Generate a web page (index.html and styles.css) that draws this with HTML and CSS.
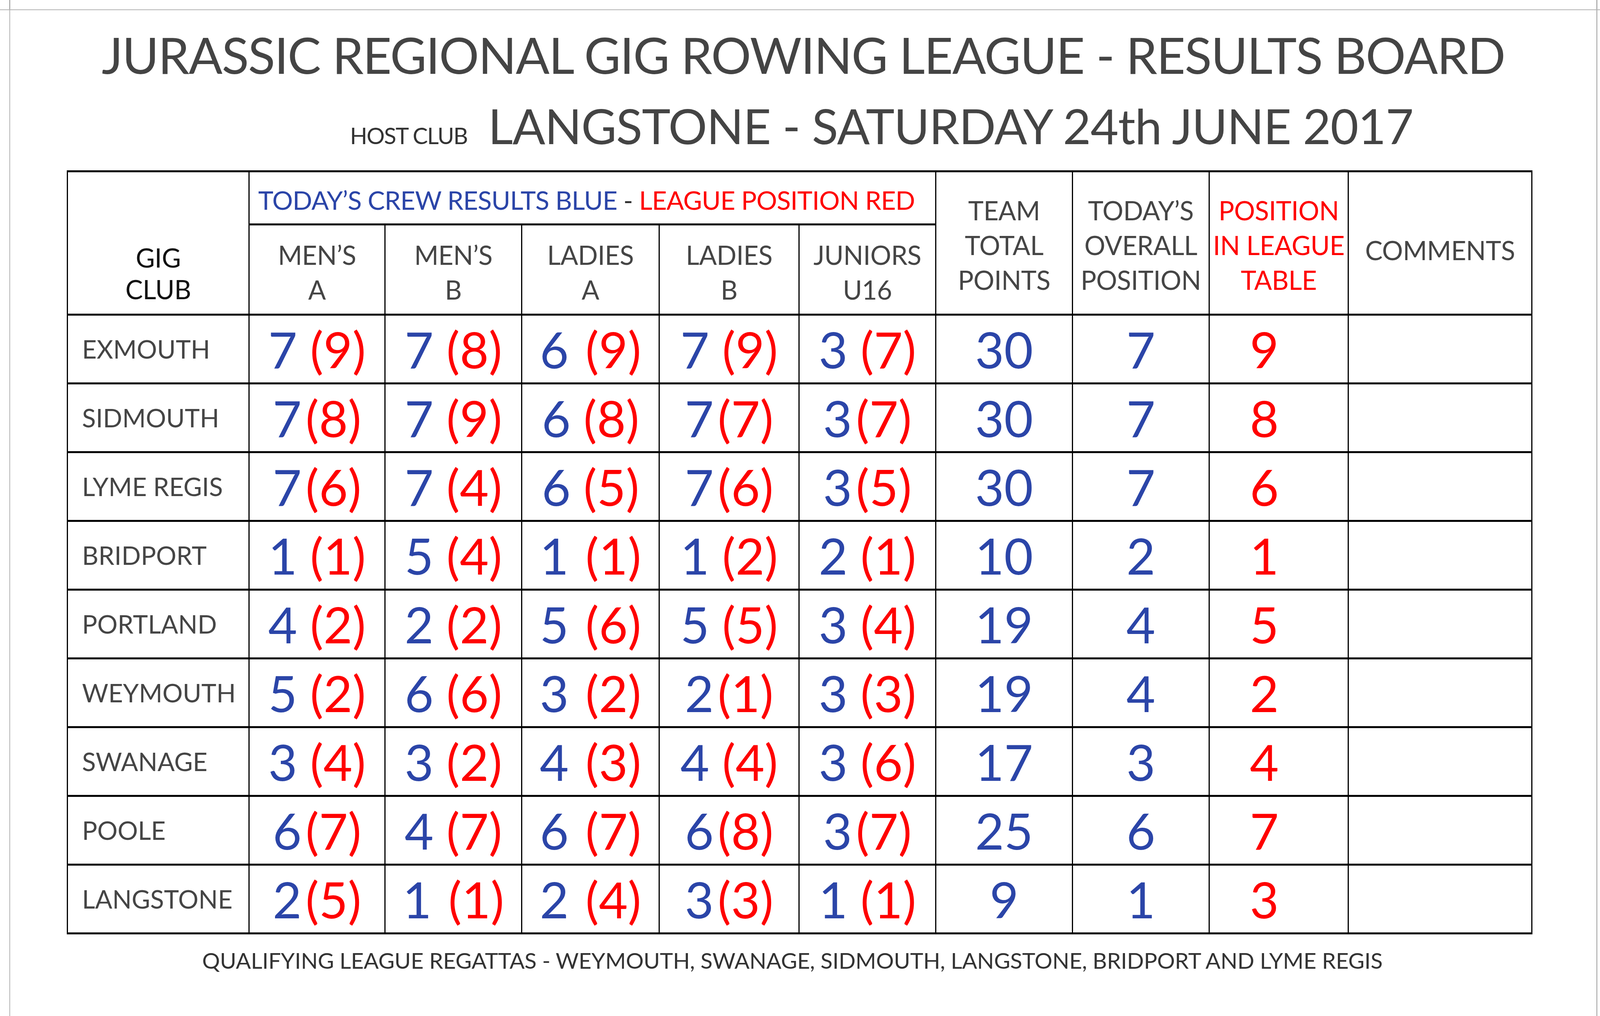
FILE: index.html
```html
<!DOCTYPE html>
<html lang="en">
<head>
<meta charset="utf-8">
<title>Jurassic Regional Gig Rowing League - Results Board</title>
<link rel="stylesheet" href="styles.css">
</head>
<body>
<div class="page">
  <h1 class="title">JURASSIC REGIONAL GIG ROWING LEAGUE - RESULTS BOARD</h1>
  <div class="subtitle">
    <span class="host">HOST CLUB</span>
    <span class="event">LANGSTONE - SATURDAY 24th JUNE 2017</span>
  </div>

  <table class="board">
    <colgroup>
      <col class="c-club">
      <col class="c-mena">
      <col class="c-menb">
      <col class="c-ladya">
      <col class="c-ladyb">
      <col class="c-jun">
      <col class="c-team">
      <col class="c-overall">
      <col class="c-pos">
      <col class="c-comments">
    </colgroup>
    <thead>
      <tr class="head-top">
        <th rowspan="2" class="h-club">GIG<br>CLUB</th>
        <th colspan="5" class="h-legend"><span class="blue">TODAY’S CREW RESULTS BLUE</span> - <span class="red">LEAGUE POSITION RED</span></th>
        <th rowspan="2" class="h-multi">TEAM<br>TOTAL<br>POINTS</th>
        <th rowspan="2" class="h-multi">TODAY’S<br>OVERALL<br>POSITION</th>
        <th rowspan="2" class="h-multi h-red">POSITION<br>IN LEAGUE<br>TABLE</th>
        <th rowspan="2" class="h-comments">COMMENTS</th>
      </tr>
      <tr class="head-sub">
        <th>MEN’S<br>A</th>
        <th>MEN’S<br>B</th>
        <th>LADIES<br>A</th>
        <th>LADIES<br>B</th>
        <th>JUNIORS<br>U16</th>
      </tr>
    </thead>
    <tbody>
      <tr>
        <td class="club">EXMOUTH</td>
        <td class="score"><span class="blue">7</span> <span class="red">(9)</span></td>
        <td class="score"><span class="blue">7</span> <span class="red">(8)</span></td>
        <td class="score"><span class="blue">6</span> <span class="red wide">(9)</span></td>
        <td class="score"><span class="blue">7</span> <span class="red">(9)</span></td>
        <td class="score"><span class="blue">3</span> <span class="red">(7)</span></td>
        <td class="num blue">30</td>
        <td class="num blue">7</td>
        <td class="num red pos">9</td>
        <td class="comment"></td>
      </tr>
      <tr>
        <td class="club">SIDMOUTH</td>
        <td class="score"><span class="blue">7</span><span class="red tight">(8)</span></td>
        <td class="score"><span class="blue">7</span> <span class="red">(9)</span></td>
        <td class="score"><span class="blue">6</span> <span class="red">(8)</span></td>
        <td class="score"><span class="blue">7</span><span class="red tight">(7)</span></td>
        <td class="score"><span class="blue">3</span><span class="red tight">(7)</span></td>
        <td class="num blue">30</td>
        <td class="num blue">7</td>
        <td class="num red pos">8</td>
        <td class="comment"></td>
      </tr>
      <tr>
        <td class="club">LYME REGIS</td>
        <td class="score"><span class="blue">7</span><span class="red tight">(6)</span></td>
        <td class="score"><span class="blue">7</span> <span class="red">(4)</span></td>
        <td class="score"><span class="blue">6</span> <span class="red">(5)</span></td>
        <td class="score"><span class="blue">7</span><span class="red tight">(6)</span></td>
        <td class="score"><span class="blue">3</span><span class="red tight">(5)</span></td>
        <td class="num blue">30</td>
        <td class="num blue">7</td>
        <td class="num red pos">6</td>
        <td class="comment"></td>
      </tr>
      <tr>
        <td class="club">BRIDPORT</td>
        <td class="score"><span class="blue">1</span> <span class="red">(1)</span></td>
        <td class="score"><span class="blue">5</span> <span class="red">(4)</span></td>
        <td class="score"><span class="blue">1</span> <span class="red wide">(1)</span></td>
        <td class="score"><span class="blue">1</span> <span class="red">(2)</span></td>
        <td class="score"><span class="blue">2</span> <span class="red">(1)</span></td>
        <td class="num blue">10</td>
        <td class="num blue">2</td>
        <td class="num red pos">1</td>
        <td class="comment"></td>
      </tr>
      <tr>
        <td class="club">PORTLAND</td>
        <td class="score"><span class="blue">4</span> <span class="red">(2)</span></td>
        <td class="score"><span class="blue">2</span> <span class="red">(2)</span></td>
        <td class="score"><span class="blue">5</span> <span class="red wide">(6)</span></td>
        <td class="score"><span class="blue">5</span> <span class="red">(5)</span></td>
        <td class="score"><span class="blue">3</span> <span class="red">(4)</span></td>
        <td class="num blue">19</td>
        <td class="num blue">4</td>
        <td class="num red pos">5</td>
        <td class="comment"></td>
      </tr>
      <tr>
        <td class="club">WEYMOUTH</td>
        <td class="score"><span class="blue">5</span> <span class="red">(2)</span></td>
        <td class="score"><span class="blue">6</span> <span class="red">(6)</span></td>
        <td class="score"><span class="blue">3</span> <span class="red wide">(2)</span></td>
        <td class="score"><span class="blue">2</span><span class="red tight">(1)</span></td>
        <td class="score"><span class="blue">3</span> <span class="red">(3)</span></td>
        <td class="num blue">19</td>
        <td class="num blue">4</td>
        <td class="num red pos">2</td>
        <td class="comment"></td>
      </tr>
      <tr>
        <td class="club">SWANAGE</td>
        <td class="score"><span class="blue">3</span> <span class="red">(4)</span></td>
        <td class="score"><span class="blue">3</span> <span class="red">(2)</span></td>
        <td class="score"><span class="blue">4</span> <span class="red wide">(3)</span></td>
        <td class="score"><span class="blue">4</span> <span class="red">(4)</span></td>
        <td class="score"><span class="blue">3</span> <span class="red">(6)</span></td>
        <td class="num blue">17</td>
        <td class="num blue">3</td>
        <td class="num red pos">4</td>
        <td class="comment"></td>
      </tr>
      <tr>
        <td class="club">POOLE</td>
        <td class="score"><span class="blue">6</span><span class="red tight">(7)</span></td>
        <td class="score"><span class="blue">4</span> <span class="red">(7)</span></td>
        <td class="score"><span class="blue">6</span> <span class="red wide">(7)</span></td>
        <td class="score"><span class="blue">6</span><span class="red tight">(8)</span></td>
        <td class="score"><span class="blue">3</span><span class="red tight">(7)</span></td>
        <td class="num blue">25</td>
        <td class="num blue">6</td>
        <td class="num red pos">7</td>
        <td class="comment"></td>
      </tr>
      <tr>
        <td class="club">LANGSTONE</td>
        <td class="score"><span class="blue">2</span><span class="red tight">(5)</span></td>
        <td class="score"><span class="blue">1</span> <span class="red wide">(1)</span></td>
        <td class="score"><span class="blue">2</span> <span class="red wide">(4)</span></td>
        <td class="score"><span class="blue">3</span><span class="red tight">(3)</span></td>
        <td class="score"><span class="blue">1</span> <span class="red">(1)</span></td>
        <td class="num blue">9</td>
        <td class="num blue">1</td>
        <td class="num red pos">3</td>
        <td class="comment"></td>
      </tr>
    </tbody>
  </table>

  <p class="footer">QUALIFYING LEAGUE REGATTAS - WEYMOUTH, SWANAGE, SIDMOUTH, LANGSTONE, BRIDPORT AND LYME REGIS</p>
</div>
</body>
</html>
```

FILE: styles.css
```css
html {
  margin: 0;
  padding: 0;
  overflow: hidden;
  background: #ffffff;
}

body {
  margin: 0;
  padding: 24px 0 0 24px;
  box-sizing: border-box;
  width: 4119px;
  height: 2601px;
  overflow: hidden;
  font-family: "Lato", "Open Sans", "Liberation Sans", sans-serif;
  color: #444444;
  background: #ffffff;
}

.page {
  position: relative;
  box-sizing: border-box;
  width: 4065px;
  height: 2577px;
  border-top: 2px solid #b3b3b3;
  border-left: 2px solid #b3b3b3;
  border-right: 2px solid #9c9c9c;
}

/* crop-mark extensions of the page outline */
.page::before {
  content: "";
  position: absolute;
  top: -2px;
  left: -26px;
  width: 4119px;
  height: 2px;
  background: #b3b3b3;
}

.page::after {
  content: "";
  position: absolute;
  top: -26px;
  left: -2px;
  width: 4065px;
  height: 24px;
  box-sizing: border-box;
  border-left: 2px solid #8f8f8f;
  border-right: 2px solid #8f8f8f;
}

.title {
  margin: 50px 0 0 0;
  font-size: 128px;
  line-height: 128px;
  letter-spacing: -2px;
  font-weight: 400;
  text-align: center;
  color: #444444;
  white-space: nowrap;
}

.subtitle {
  display: flex;
  align-items: baseline;
  gap: 53px;
  margin-top: 55px;
  padding-left: 870px;
  height: 124px;
  white-space: nowrap;
}

.host {
  font-size: 58px;
  line-height: 58px;
  letter-spacing: -1.8px;
  color: #333333;
}

.event {
  font-size: 124px;
  line-height: 124px;
  letter-spacing: -1.3px;
  color: #444444;
}

.board {
  margin: 53px 0 0 145px;
  width: 3750px;
  table-layout: fixed;
  border-collapse: collapse;
}

.c-club { width: 465px; }
.c-mena { width: 348px; }
.c-menb { width: 350px; }
.c-ladya { width: 352px; }
.c-ladyb { width: 358px; }
.c-jun { width: 350px; }
.c-team { width: 350px; }
.c-overall { width: 350px; }
.c-pos { width: 356px; }
.c-comments { width: 470px; }

.board th,
.board td {
  border-left: 3px solid #000;
  border-right: 3px solid #000;
  border-top: 5px solid #000;
  border-bottom: 5px solid #000;
  padding: 0;
}

.board th {
  font-weight: 400;
  font-size: 67px;
  line-height: 89px;
  letter-spacing: -0.5px;
  color: #454545;
  text-align: center;
  vertical-align: middle;
  white-space: nowrap;
}

.head-top { height: 136px; }
.head-sub { height: 231px; }

.head-sub th {
  padding-top: 14px;
}

.board th.h-multi {
  padding-top: 10px;
}

.board th.h-club {
  color: #111111;
  line-height: 81px;
  vertical-align: bottom;
  padding-bottom: 22px;
}

.board th.h-red {
  color: #ff0000;
}

.board th.h-legend {
  text-align: left;
  padding-left: 22px;
  padding-top: 10px;
  font-size: 66px;
  letter-spacing: -0.8px;
  color: #333333;
}

.board th.h-comments {
  padding-top: 36px;
}

.board tbody tr {
  height: 176px;
}

.board td.club {
  font-size: 65px;
  line-height: 1;
  color: #454545;
  text-align: left;
  padding-left: 36px;
  vertical-align: middle;
  white-space: nowrap;
}

.score,
.num {
  font-size: 128px;
  line-height: 1;
  text-align: center;
  vertical-align: middle;
  white-space: nowrap;
}

.tight { margin-left: 10px; }
.wide { margin-left: 10px; }

.board td.pos {
  padding-right: 74px;
}

.blue { color: #2b45a8; }
.red { color: #ff0000; }

.footer {
  margin: 38px 0 0 0;
  padding-right: 56px;
  font-size: 57px;
  line-height: 57px;
  letter-spacing: -0.2px;
  text-align: center;
  color: #333333;
  white-space: nowrap;
}
```
